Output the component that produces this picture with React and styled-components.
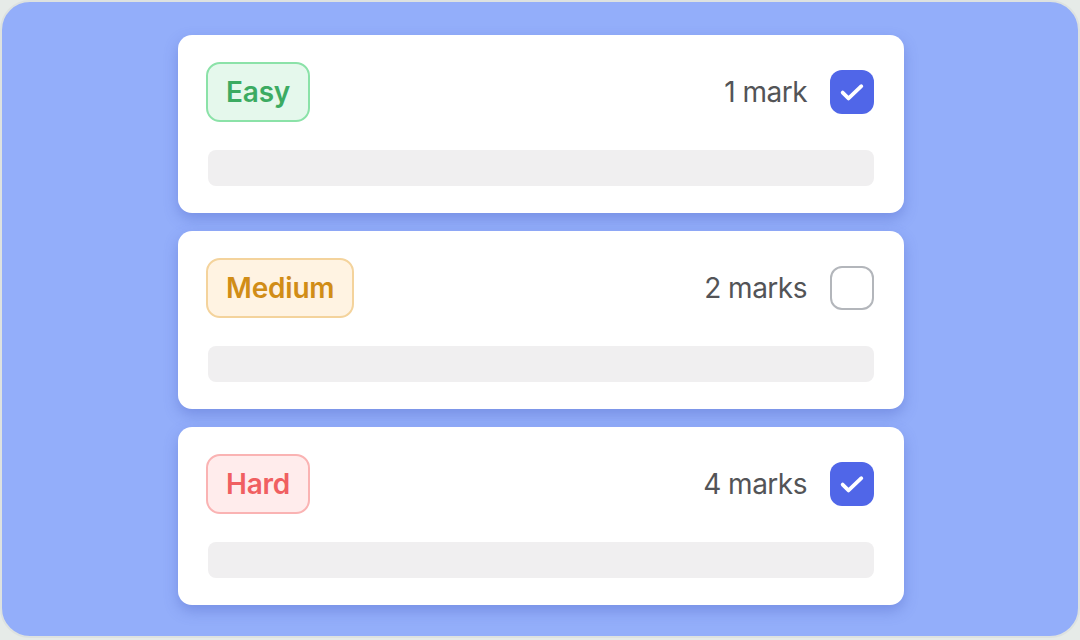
import React from "react";
import styled, { createGlobalStyle } from "styled-components";

const GlobalStyle = createGlobalStyle`
  html, body {
    margin: 0;
    padding: 0;
    background: #e6ebe8;
  }
  body {
    font-family: Inter, "Open Sans", sans-serif;
  }
`;

const tones = {
  easy: { text: "#3cab62", bg: "#e5f8ec", border: "#8be2a8" },
  medium: { text: "#d18d17", bg: "#fff3e2", border: "#f4d39c" },
  hard: { text: "#f05f61", bg: "#ffecec", border: "#fab3b3" },
};

const questions = [
  { id: 1, level: "easy", label: "Easy", marks: "1 mark", checked: true },
  { id: 2, level: "medium", label: "Medium", marks: "2 marks", checked: false },
  { id: 3, level: "hard", label: "Hard", marks: "4 marks", checked: true },
];

function App() {
  return (
    <>
      <GlobalStyle />
      <Frame>
        <CardList>
          {questions.map((q) => (
            <Card key={q.id}>
              <CardHeader>
                <LevelPill $tone={tones[q.level]}>{q.label}</LevelPill>
                <MarksGroup>
                  <Marks>{q.marks}</Marks>
                  <Checkbox $checked={q.checked}>
                    {q.checked && (
                      <svg width="28" height="28" viewBox="0 0 24 24" fill="none">
                        <path
                          d="M4 12.5l5 5L20 7"
                          stroke="#fff"
                          strokeWidth="3.2"
                          strokeLinecap="round"
                          strokeLinejoin="round"
                        />
                      </svg>
                    )}
                  </Checkbox>
                </MarksGroup>
              </CardHeader>
              <Placeholder />
            </Card>
          ))}
        </CardList>
      </Frame>
    </>
  );
}

const Frame = styled.div`
  box-sizing: border-box;
  width: 1080px;
  height: 638px;
  background: #93aefa;
  border: 2px solid #dde2e0;
  border-radius: 30px;
  display: flex;
  justify-content: center;
  padding-top: 33px;
`;

const CardList = styled.div`
  display: flex;
  flex-direction: column;
  gap: 18px;
  width: 726px;
  margin-left: 2px;
`;

const Card = styled.div`
  box-sizing: border-box;
  height: 178px;
  background: #fff;
  border-radius: 14px;
  padding: 27px 30px 27px 28px;
  display: flex;
  flex-direction: column;
  gap: 28px;
  box-shadow: 0 6px 14px rgba(70, 90, 190, 0.35);
`;

const CardHeader = styled.div`
  display: flex;
  align-items: center;
  justify-content: space-between;
  height: 60px;
`;

const LevelPill = styled.div`
  box-sizing: border-box;
  height: 60px;
  padding: 0 18px;
  display: flex;
  align-items: center;
  border-radius: 14px;
  border: 2px solid ${(p) => p.$tone.border};
  background: ${(p) => p.$tone.bg};
  color: ${(p) => p.$tone.text};
  font-size: 28px;
  font-weight: 600;
  letter-spacing: -0.2px;
`;

const MarksGroup = styled.div`
  display: flex;
  align-items: center;
  gap: 23px;
`;

const Marks = styled.span`
  font-size: 28px;
  font-weight: 400;
  color: #535457;
  letter-spacing: -0.5px;
`;

const Checkbox = styled.div`
  box-sizing: border-box;
  width: 44px;
  height: 44px;
  border-radius: 12px;
  display: flex;
  align-items: center;
  justify-content: center;
  background: ${(p) => (p.$checked ? "#5066e8" : "#fff")};
  border: ${(p) => (p.$checked ? "none" : "2px solid #b3b6bb")};
`;

const Placeholder = styled.div`
  height: 36px;
  margin-left: 2px;
  border-radius: 8px;
  background: #f0eff0;
`;

export default App;
